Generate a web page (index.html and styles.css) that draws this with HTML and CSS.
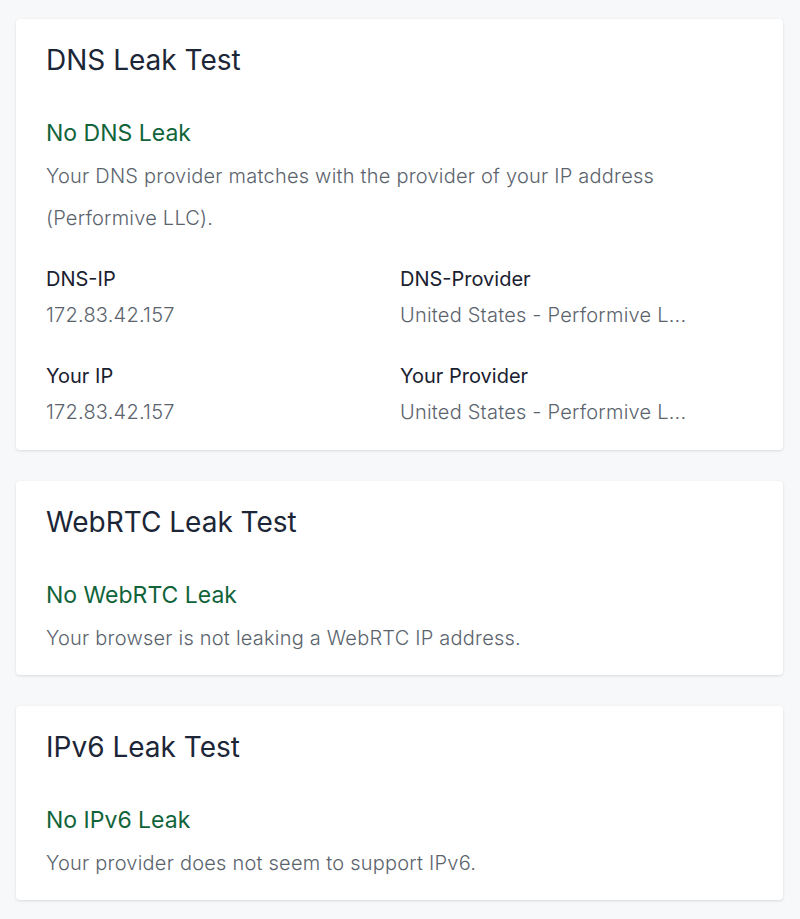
FILE: index.html
```html
<!DOCTYPE html>
<html lang="en">

<head>
    <meta charset="utf-8">
    <title>Leak Tests</title>
    <link rel="stylesheet" href="styles.css">
</head>

<body>
    <div class="page">
        <div class="card">
            <h2 class="card-title">DNS Leak Test</h2>
            <h3 class="status">No DNS Leak</h3>
            <p class="desc">Your DNS provider matches with the provider of your IP address (Performive LLC).</p>
            <div class="info-grid">
                <div class="info">
                    <div class="info-label">DNS-IP</div>
                    <div class="info-value">172.83.42.157</div>
                </div>
                <div class="info">
                    <div class="info-label">DNS-Provider</div>
                    <div class="info-value">United States - Performive L...</div>
                </div>
                <div class="info">
                    <div class="info-label">Your IP</div>
                    <div class="info-value">172.83.42.157</div>
                </div>
                <div class="info">
                    <div class="info-label">Your Provider</div>
                    <div class="info-value">United States - Performive L...</div>
                </div>
            </div>
        </div>

        <div class="card">
            <h2 class="card-title">WebRTC Leak Test</h2>
            <h3 class="status">No WebRTC Leak</h3>
            <p class="desc">Your browser is not leaking a WebRTC IP address.</p>
        </div>

        <div class="card">
            <h2 class="card-title">IPv6 Leak Test</h2>
            <h3 class="status">No IPv6 Leak</h3>
            <p class="desc">Your provider does not seem to support IPv6.</p>
        </div>
    </div>
</body>

</html>
```

FILE: styles.css
```css
* {
    margin: 0;
    padding: 0;
    box-sizing: border-box;
}

body {
    background-color: #f7f8fa;
    font-family: Inter, "Noto Sans", sans-serif;
}

.page {
    display: flex;
    flex-direction: column;
    gap: 31px;
    padding: 19px 17px 19px 16px;
}

.card {
    background-color: #fff;
    border-radius: 4px;
    box-shadow: 0 1px 3px rgba(0, 0, 0, 0.12);
    padding: 23px 30px 16px 30px;
}

.card-title {
    font-size: 28px;
    line-height: 36px;
    font-weight: 400;
    color: #1c2637;
}

.status {
    margin-top: 40px;
    font-size: 23px;
    line-height: 30px;
    font-weight: 400;
    color: #11643a;
}

.desc {
    margin-top: 7px;
    font-size: 20px;
    line-height: 42px;
    font-weight: 300;
    letter-spacing: 0.22px;
    color: #5b636d;
}

.info-grid {
    display: grid;
    grid-template-columns: 354px 1fr;
    row-gap: 33px;
    margin-top: 26px;
    margin-bottom: 8px;
}

.info-label {
    font-size: 20px;
    line-height: 28px;
    color: #1a2130;
}

.info-value {
    margin-top: 8px;
    font-size: 20px;
    line-height: 28px;
    font-weight: 300;
    letter-spacing: 0.22px;
    color: #5b636d;
    white-space: nowrap;
}
```
